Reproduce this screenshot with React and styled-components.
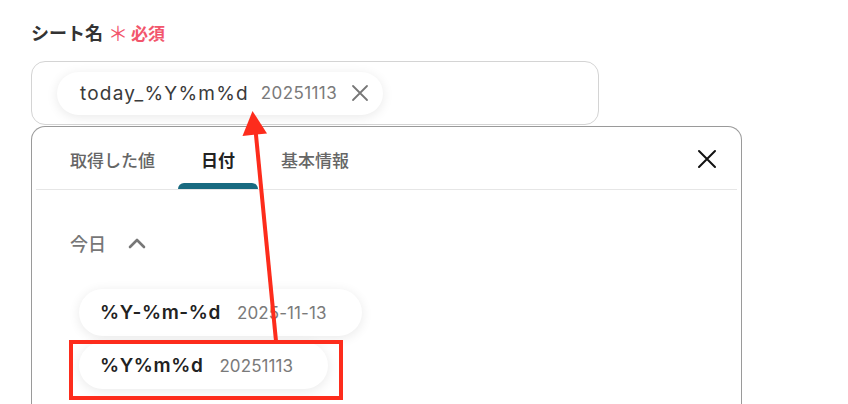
import React from "react";
import styled, { createGlobalStyle } from "styled-components";

const Global = createGlobalStyle`
  html, body { margin: 0; padding: 0; background: #fff; }
  body { font-family: "Inter", "Noto Sans CJK JP", sans-serif; overflow: hidden; }
  #root { width: 848px; height: 404px; }
`;

const Page = styled.div`
  position: relative;
  width: 848px;
  height: 404px;
  overflow: hidden;
  padding: 18px 0 0 31px;
  box-sizing: border-box;
`;

const LabelRow = styled.div`
  display: flex;
  align-items: center;
  gap: 4px;
  height: 28px;
`;

const Label = styled.span`
  font-size: 18px;
  font-weight: 600;
  color: #333;
`;

const Required = styled.span`
  display: flex;
  align-items: center;
  gap: 3px;
  color: #f2566c;
  font-size: 17px;
  font-weight: 600;
  margin-left: 1px;
`;

const Star = styled.span`
  font-family: "Noto Sans CJK JP", sans-serif;
  font-size: 20px;
  font-weight: 400;
  line-height: 1;
  margin-top: 2px;
`;

const InputBox = styled.div`
  margin-top: 15px;
  width: 568px;
  height: 64px;
  box-sizing: border-box;
  border: 1px solid #d4d4d4;
  border-radius: 14px;
  display: flex;
  align-items: center;
  padding-left: 25px;
`;

const Chip = styled.div`
  display: inline-flex;
  align-items: center;
  height: ${(p) => p.$h}px;
  border-radius: 24px;
  background: #fff;
  box-shadow: 0 2px 12px rgba(0, 0, 0, 0.09);
  padding: 0 ${(p) => p.$pr}px 0 ${(p) => p.$pl}px;
  box-sizing: border-box;
`;

const ChipName = styled.span`
  font-size: ${(p) => p.$size}px;
  font-weight: ${(p) => p.$weight};
  color: ${(p) => p.$color};
  letter-spacing: ${(p) => p.$ls}px;
`;

const ChipValue = styled.span`
  font-size: ${(p) => p.$size}px;
  color: #7a7a7a;
  margin-left: ${(p) => p.$gap}px;
  letter-spacing: ${(p) => p.$ls}px;
`;

const ChipClose = styled.svg`
  margin-left: 14px;
  flex: none;
`;

const Panel = styled.div`
  margin-top: 1px;
  width: 711px;
  height: 300px;
  box-sizing: border-box;
  border: 1px solid #9a9a9a;
  border-bottom: none;
  border-radius: 14px 14px 0 0;
  padding: 0 4px;
`;

const Header = styled.div`
  height: 62px;
  display: flex;
  align-items: stretch;
  border-bottom: 1px solid #e6e6e6;
  padding-left: 11px;
  padding-right: 20px;
`;

const Tab = styled.div`
  position: relative;
  padding: 0 23px;
  display: flex;
  align-items: center;
  font-size: 17px;
  color: ${(p) => (p.$active ? "#222" : "#666")};
  font-weight: ${(p) => (p.$active ? 600 : 500)};
  padding-top: 2px;

  &::after {
    content: "";
    display: ${(p) => (p.$active ? "block" : "none")};
    position: absolute;
    left: 0;
    right: 0;
    bottom: 0;
    height: 6px;
    border-radius: 6px 6px 0 0;
    background: #186a80;
  }
`;

const Spacer = styled.div`
  flex: 1;
`;

const CloseBtn = styled.div`
  display: flex;
  align-items: center;
  padding-top: 2px;
`;

const Body = styled.div`
  padding: 42px 0 0 34px;
`;

const Section = styled.div`
  display: flex;
  align-items: center;
  gap: 22px;
  font-size: 18px;
  color: #777;
  font-weight: 500;
  height: 22px;
`;

const ChipList = styled.div`
  margin-top: 35px;
  padding-left: 9px;
  display: flex;
  flex-direction: column;
  align-items: flex-start;
  gap: 6px;
`;

const Overlay = styled.svg`
  position: absolute;
  left: 0;
  top: 0;
  pointer-events: none;
`;

export default function App() {
  return (
    <>
      <Global />
      <Page>
        <LabelRow>
          <Label>シート名</Label>
          <Required>
            <Star>＊</Star>
            必須
          </Required>
        </LabelRow>
        <InputBox>
          <Chip $h={43} $pl={23} $pr={14}>
            <ChipName $size={19} $weight={400} $color="#3a3a3a" $ls={1.2}>
              today_%Y%m%d
            </ChipName>
            <ChipValue $size={17} $gap={12} $ls={0.4}>20251113</ChipValue>
            <ChipClose width="18" height="18" viewBox="0 0 18 18">
              <path d="M2 2 L16 16 M16 2 L2 16" stroke="#777" strokeWidth="1.8" strokeLinecap="round" />
            </ChipClose>
          </Chip>
        </InputBox>
        <Panel>
          <Header>
            <Tab>取得した値</Tab>
            <Tab $active>日付</Tab>
            <Tab>基本情報</Tab>
            <Spacer />
            <CloseBtn>
              <svg width="20" height="20" viewBox="0 0 20 20">
                <path d="M2 2 L18 18 M18 2 L2 18" stroke="#111" strokeWidth="2" strokeLinecap="round" />
              </svg>
            </CloseBtn>
          </Header>
          <Body>
            <Section>
              今日
              <svg width="18" height="12" viewBox="0 0 18 12">
                <path d="M2 10 L9 3 L16 10" fill="none" stroke="#777" strokeWidth="2.6" strokeLinecap="round" strokeLinejoin="round" />
              </svg>
            </Section>
            <ChipList>
              <Chip $h={47} $pl={21} $pr={35}>
                <ChipName $size={19} $weight={600} $color="#222" $ls={0.6}>%Y-%m-%d</ChipName>
                <ChipValue $size={17} $gap={16} $ls={0.1}>2025-11-13</ChipValue>
              </Chip>
              <Chip $h={47} $pl={21} $pr={35}>
                <ChipName $size={19} $weight={600} $color="#222" $ls={0.6}>%Y%m%d</ChipName>
                <ChipValue $size={17} $gap={16} $ls={0.1}>20251113</ChipValue>
              </Chip>
            </ChipList>
          </Body>
        </Panel>
        <Overlay width="848" height="404" viewBox="0 0 848 404">
          <rect x="71" y="342" width="270" height="56" fill="none" stroke="#fd2c1c" strokeWidth="4" />
          <line x1="276" y1="341" x2="255.5" y2="130" stroke="#fd2c1c" strokeWidth="4" />
          <polygon points="252.5,111 242.5,136 267,133.5" fill="#fd2c1c" />
        </Overlay>
      </Page>
    </>
  );
}
